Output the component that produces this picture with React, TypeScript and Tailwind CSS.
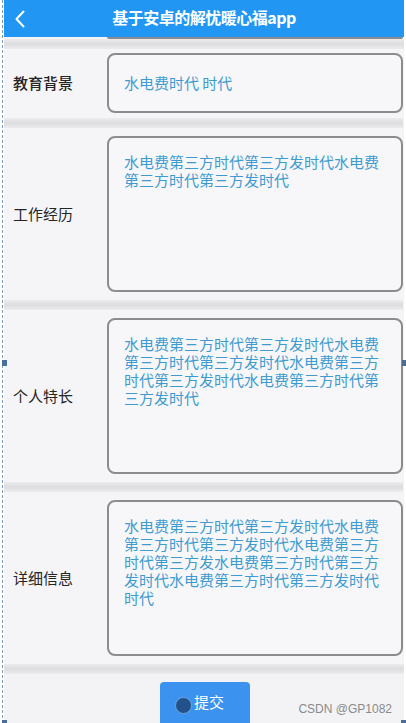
const FIELDS = [
  {
    label: "工作经历",
    text: "水电费第三方时代第三方发时代水电费第三方时代第三方发时代",
  },
  {
    label: "个人特长",
    text: "水电费第三方时代第三方发时代水电费第三方时代第三方发时代水电费第三方时代第三方发时代水电费第三方时代第三方发时代",
  },
  {
    label: "详细信息",
    text: "水电费第三方时代第三方发时代水电费第三方时代第三方发时代水电费第三方时代第三方发水电费第三方时代第三方发时代水电费第三方时代第三方发时代时代",
  },
];

function Band() {
  return <div className="h-[10px] bg-gradient-to-b from-[#ececee] via-[#dddddf] to-[#ececee]" />;
}

function BackIcon() {
  return (
    <svg width="12" height="18" viewBox="0 0 12 18" fill="none">
      <path d="M9.5 1.5 L2.5 9 L9.5 16.5" stroke="white" strokeWidth="2" strokeLinecap="round" strokeLinejoin="round" />
    </svg>
  );
}

function Row({ label, text }: { label: string; text: string }) {
  return (
    <div className="flex items-center bg-[#f5f5f7] py-[8px]">
      <div className="w-[103px] shrink-0 pl-[9px] text-[15px] text-[#252525]">{label}</div>
      <div className="h-[156px] flex-1 rounded-[8px] border-2 border-[#8c8c8e] bg-[#f7f7f9] pl-[15px] pr-[20px] pt-[15px] text-[15px] leading-[18px] text-[#3d9bd0]">
        {text}
      </div>
    </div>
  );
}

export default function App() {
  return (
    <div
      className="relative h-[723px] w-[406px] overflow-hidden bg-white"
      style={{ fontFamily: '"Noto Sans CJK SC", "Noto Sans", sans-serif' }}
    >
      <div className="ml-[4px] mr-[2px] h-full bg-[#f3f3f5]">
        <header className="flex h-[37px] w-full items-center bg-[#2196f3] px-[10px]">
          <div className="w-[20px] shrink-0">
            <BackIcon />
          </div>
          <h1 className="flex-1 pb-[3px] text-center text-[16px] font-bold tracking-[-0.5px] text-white">
            基于安卓的解忧暖心福app
          </h1>
          <div className="w-[20px] shrink-0" />
        </header>

        {/* bottom edge of the field scrolled above */}
        <div className="bg-[#f5f5f7] pl-[103px] pr-[1px]">
          <div className="h-[2px] rounded-b-[6px] border-b-2 border-[#8c8c8e]" />
        </div>
        <Band />

        <div className="mr-[1px] flex items-center bg-[#f5f5f7] pb-[5px] pt-[4px]">
          <div className="w-[103px] shrink-0 pl-[9px] text-[15px] font-medium text-[#252525]">教育背景</div>
          <div className="flex h-[60px] flex-1 items-center rounded-[8px] border-2 border-[#8c8c8e] bg-[#f7f7f9] pl-[15px] text-[15px] text-[#3d9bd0]">
            水电费时代 时代
          </div>
        </div>

        {FIELDS.map((f) => (
          <div key={f.label} className="mr-[1px]">
            <Band />
            <Row label={f.label} text={f.text} />
          </div>
        ))}
        <Band />

        <div className="relative flex h-[60px] justify-center pt-[8px]">
          <div className="relative ml-[2px] flex h-[60px] w-[90px] justify-center rounded-t-[4px] bg-[#3c93ef] pl-[8px] pt-[10px] text-[15px] leading-[20px] text-white">
            提交
            <span className="absolute left-[15px] top-[15px] h-[17px] w-[17px] rounded-full border border-[#6da4dc] bg-[#23528a]" />
          </div>
          <span
            className="absolute right-[12px] top-[26px] text-[12px] text-[#8a8a8a]"
            style={{ fontFamily: '"Liberation Sans", sans-serif' }}
          >
            CSDN @GP1082
          </span>
        </div>
      </div>

      {/* screenshot selection frame */}
      <div className="absolute bottom-0 left-[2px] top-0 border-l border-dashed border-[#7d9bb8]" />
      <div className="absolute left-[2px] top-[360px] h-[6px] w-[5px] bg-[#4a6f96]" />
      <div className="absolute right-0 top-[360px] h-[6px] w-[4px] bg-[#4a6f96]" />
      <div className="absolute bottom-0 left-[2px] h-[3px] w-[5px] bg-[#4a6f96]" />
      <div className="absolute bottom-0 right-0 h-[3px] w-[5px] bg-[#4a6f96]" />
    </div>
  );
}
